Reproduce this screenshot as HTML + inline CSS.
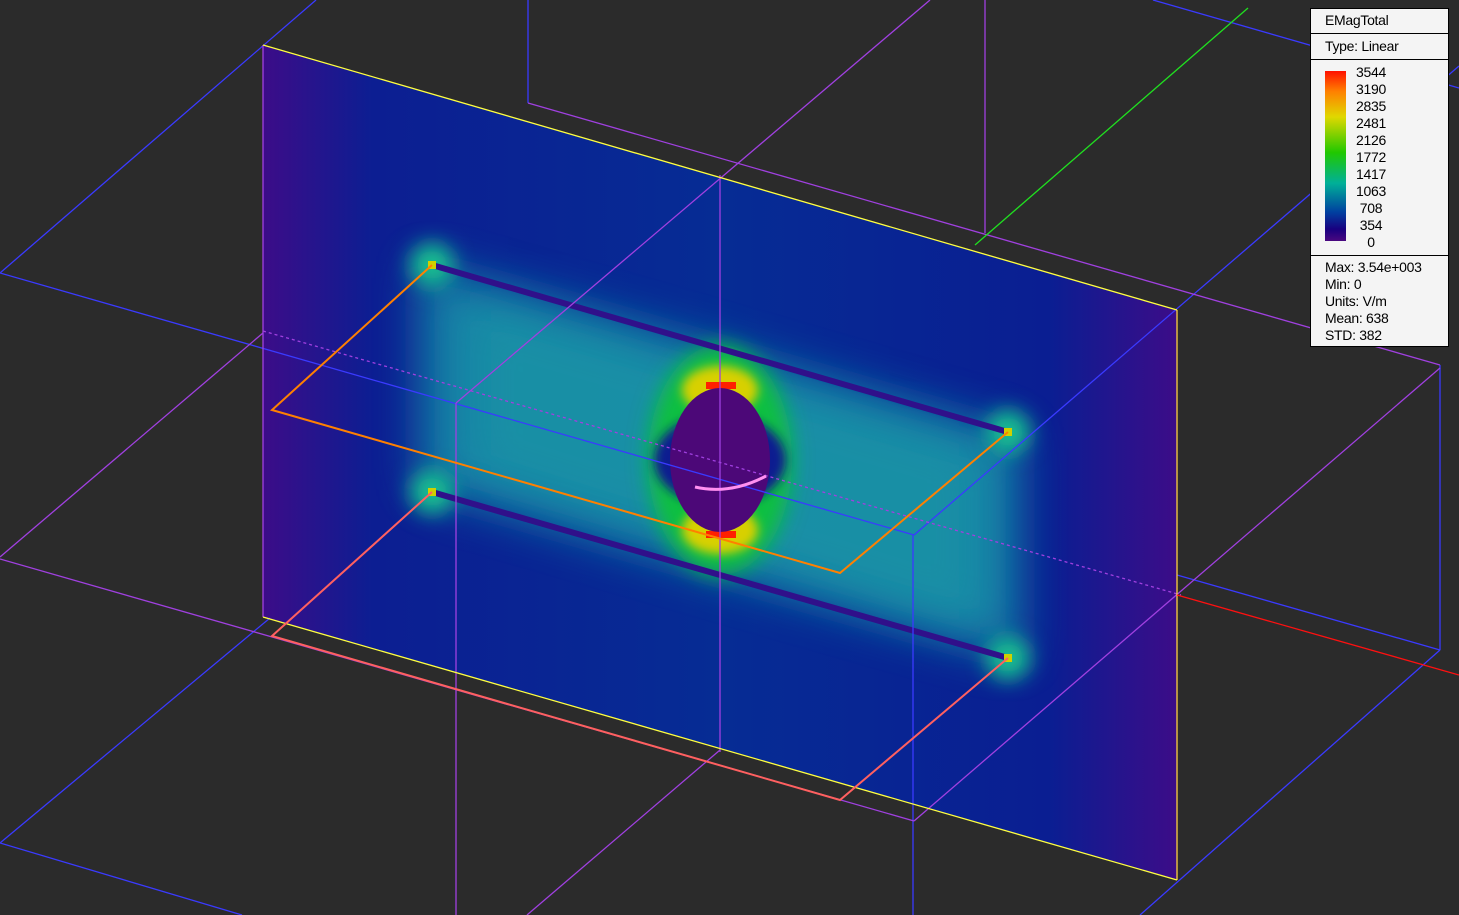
<!DOCTYPE html>
<html><head><meta charset="utf-8"><style>
html,body{margin:0;padding:0;background:#2b2b2b;width:1459px;height:915px;overflow:hidden;font-family:"Liberation Sans",sans-serif}
#lg{position:absolute;left:1310px;top:8px;width:139px;height:339px;background:#f4f4f4;border:1px solid #000;box-sizing:border-box;font-size:14px;color:#000;letter-spacing:-0.3px}
#lg .r{border-bottom:1px solid #000;padding-left:14px}
</style></head><body>
<svg width="1459" height="915" style="position:absolute;left:0;top:0">
<defs>
<linearGradient id="bg" x1="263" y1="0" x2="1177" y2="0" gradientUnits="userSpaceOnUse">
<stop offset="0" stop-color="#3c0c88"/><stop offset="0.12" stop-color="#0c1e92"/><stop offset="0.5" stop-color="#062c94"/><stop offset="0.86" stop-color="#0a1e92"/><stop offset="1" stop-color="#3c0c88"/>
</linearGradient>
<filter id="b1" x="-50%" y="-50%" width="200%" height="200%"><feGaussianBlur stdDeviation="22"/></filter>
<filter id="b2" x="-50%" y="-50%" width="200%" height="200%"><feGaussianBlur stdDeviation="10"/></filter>
<filter id="b3" x="-50%" y="-50%" width="200%" height="200%"><feGaussianBlur stdDeviation="5"/></filter>
<clipPath id="pl"><polygon points="263,45 1177,310 1177,880 263,617"/></clipPath>
</defs>
<polygon points="263,45 1177,310 1177,880 263,617" fill="url(#bg)"/>
<g clip-path="url(#pl)">
<polygon points="420,262 1020,435 1020,660 420,488" fill="#138aa8" filter="url(#b1)" opacity="0.9"/>
<polygon points="470,300 980,450 980,630 470,470" fill="#1a9aa6" filter="url(#b1)" opacity="0.6"/>
<circle cx="432" cy="265" r="22" fill="#18c090" filter="url(#b2)"/>
<circle cx="1008" cy="432" r="22" fill="#18c090" filter="url(#b2)"/>
<circle cx="432" cy="492" r="22" fill="#18c090" filter="url(#b2)"/>
<circle cx="1008" cy="658" r="22" fill="#18c090" filter="url(#b2)"/>
<ellipse cx="720" cy="460" rx="72" ry="115" fill="#10c040" filter="url(#b2)"/>
<ellipse cx="720" cy="390" rx="38" ry="24" fill="#d8d000" filter="url(#b3)"/>
<ellipse cx="720" cy="530" rx="38" ry="24" fill="#d8d000" filter="url(#b3)"/>
<rect x="706" y="382" width="30" height="7" fill="#ff2000"/>
<rect x="706" y="531" width="30" height="7" fill="#ff2000"/>
<ellipse cx="720" cy="460" rx="66" ry="46" fill="#0a1c90" filter="url(#b3)"/>
<ellipse cx="720" cy="460" rx="50" ry="72" fill="#4c0878"/>
<line x1="432" y1="265" x2="1008" y2="432" stroke="#30108a" stroke-width="6"/>
<line x1="432" y1="492" x2="1008" y2="658" stroke="#30108a" stroke-width="6"/>
<rect x="428" y="261" width="8" height="8" fill="#d0d000"/>
<rect x="1004" y="428" width="8" height="8" fill="#d0d000"/>
<rect x="428" y="488" width="8" height="8" fill="#d0d000"/>
<rect x="1004" y="654" width="8" height="8" fill="#d0d000"/>
</g>
<g fill="none" stroke-width="1.3">
<g stroke="#3a3aff">
<line x1="0" y1="273" x2="316" y2="0"/>
<line x1="0" y1="273" x2="914" y2="535"/>
<line x1="528" y1="0" x2="528" y2="103"/>
<line x1="1153" y1="0" x2="1459" y2="88"/>
<line x1="914" y1="535" x2="1459" y2="66"/>
<line x1="913" y1="535" x2="913" y2="915"/>
<line x1="1177" y1="575" x2="1440" y2="650"/>
<line x1="1440" y1="365" x2="1440" y2="650"/>
<line x1="1440" y1="650" x2="1140" y2="915"/>
<line x1="0" y1="843" x2="242" y2="915"/>
<line x1="0" y1="843" x2="270" y2="618"/>
</g>
<g stroke="#a040e0">
<line x1="0" y1="557" x2="263" y2="333"/>
<line x1="263" y1="331" x2="1181" y2="595" stroke-dasharray="3 3"/>
<line x1="0" y1="559" x2="914" y2="821"/>
<line x1="930" y1="0" x2="456" y2="403"/>
<line x1="456" y1="403" x2="456" y2="915"/>
<line x1="720" y1="175" x2="720" y2="752"/>
<line x1="985" y1="0" x2="985" y2="233"/>
<line x1="528" y1="103" x2="1440" y2="365"/>
<line x1="720" y1="750" x2="527" y2="915"/>
<line x1="914" y1="821" x2="1440" y2="368"/>
<line x1="263" y1="45" x2="263" y2="617"/>
<line x1="1177" y1="310" x2="1177" y2="880" stroke="#ffd040"/>
</g>
<line x1="263" y1="45" x2="1177" y2="310" stroke="#ffff40"/>
<line x1="263" y1="617" x2="1177" y2="880" stroke="#ffff40"/>
<line x1="1177" y1="595" x2="1459" y2="675" stroke="#ff1010"/>
<line x1="975" y1="245" x2="1248" y2="8" stroke="#20e020"/>
<g stroke="#ff8000" stroke-width="2">
<polyline points="432,265 272,410 840,573 1008,432"/>
</g>
<g stroke="#ff6060" stroke-width="2">
<polyline points="432,492 272,636 840,800 1008,658"/>
</g>
<path d="M695,487 Q730,495 766,476" stroke="#ff90f0" stroke-width="3"/>
</g>
</svg>
<div id="lg">
<div class="r" style="height:24px;line-height:22px">EMagTotal</div>
<div class="r" style="height:25px;line-height:25px">Type: Linear</div>
<div class="r" style="height:195px;position:relative">
<div style="position:absolute;left:14px;top:11px;width:21px;height:170px;background:linear-gradient(#ff1000,#ff8000 12%,#e0d800 27%,#20c800 48%,#00b098 66%,#0040a0 83%,#180080 93%,#4a0880)"></div>
<div style="position:absolute;left:40px;top:4px;width:40px;text-align:center;line-height:17px">3544<br>3190<br>2835<br>2481<br>2126<br>1772<br>1417<br>1063<br>708<br>354<br>0</div>
</div>
<div style="padding-left:14px;line-height:17px;padding-top:3px">Max: 3.54e+003<br>Min: 0<br>Units: V/m<br>Mean: 638<br>STD: 382</div>
</div>
</body></html>
